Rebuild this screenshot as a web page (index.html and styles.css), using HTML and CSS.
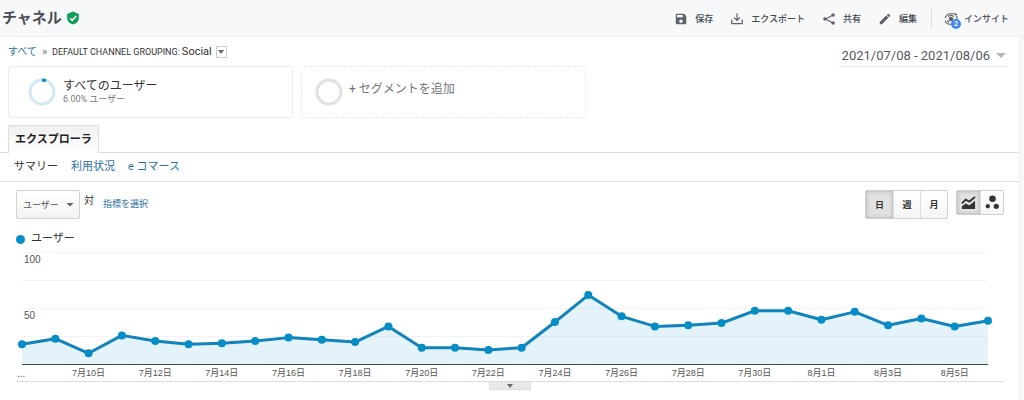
FILE: index.html
```html
<!DOCTYPE html>
<html lang="ja">
<head>
<meta charset="utf-8">
<title>チャネル</title>
<link rel="stylesheet" href="styles.css">
</head>
<body>
<header class="topbar">
  <h1 class="title">チャネル</h1>
  <svg class="shield" viewBox="0 0 24 24" aria-hidden="true"><path fill="#0f9d58" d="M12 1 2 5v7c0 5.500 4.300 9.800 10 11 5.700-1.200 10-5.500 10-11V5z"/><path fill="none" stroke="#fff" stroke-width="2.500" d="m7 12.500 3.500 3.500 7-7.500"/></svg>
  <nav class="actions">
    <button class="action" type="button"><svg class="icon" viewBox="0 0 24 24" aria-hidden="true"><path d="M17 3H5a2 2 0 0 0-2 2v14c0 1.100.9 2 2 2h14a2 2 0 0 0 2-2V7zm-5 16a3 3 0 1 1 0-6 3 3 0 0 1 0 6zm3-10H5V5h10z"/></svg>保存</button>
    <button class="action" type="button"><svg class="icon" viewBox="0 0 24 24" aria-hidden="true"><path d="M11 2h2v10l3.500-3.500L18 10l-6 6-6-6 1.500-1.500L11 12zM2 13h2v6h16v-6h2v8H2z"/></svg>エクスポート</button>
    <button class="action" type="button"><svg class="icon" viewBox="0 0 24 24" aria-hidden="true"><path fill="none" stroke="currentColor" stroke-width="2" d="M19 5 6 12l13 7"/><circle cx="19" cy="5" r="3"/><circle cx="5" cy="12" r="3"/><circle cx="19" cy="19" r="3"/></svg>共有</button>
    <button class="action" type="button"><svg class="icon" viewBox="0 0 24 24" aria-hidden="true"><path d="M3 17.200V21h3.800L17.800 9.900l-3.700-3.700zM20.700 7c.4-.4.4-1 0-1.400l-2.300-2.300a1 1 0 0 0-1.400 0l-1.900 1.800 3.800 3.800z"/></svg>編集</button>
    <button class="action insight" type="button"><span class="insight-mark"><svg class="icon" viewBox="0 0 24 24" aria-hidden="true"><g fill="none" stroke="currentColor" stroke-width="2"><path d="M2 11a10 10 0 0 1 8-8h8M22 7v6M2 15a10 10 0 0 0 6 6h5M7 8a6.500 6.500 0 0 1 10 0M6 14a6.500 6.500 0 0 0 3 4"/></g><circle cx="12" cy="12" r="4"/><circle cx="20" cy="4" r="2"/></svg><span class="badge">2</span></span>インサイト</button>
  </nav>
</header>
<main class="page">
  <div class="heading">
    <div class="crumbs"><a class="all" href="#">すべて</a><span class="sep">»</span><span class="dimension">DEFAULT CHANNEL GROUPING:</span><span>Social</span><button class="crumb-menu" type="button" aria-label="メニュー"><span class="caret"></span></button></div>
    <button class="dates" type="button">2021/07/08 - 2021/08/06<span class="caret caret-large"></span></button>
  </div>
  <section class="segments">
    <button class="segment" type="button"><svg class="ring" viewBox="0 0 28 28" aria-hidden="true"><circle cx="14" cy="14" r="12" fill="none" stroke="#d3e8f4" stroke-width="3"/><path d="M14 2a12 12 0 0 1 4 .7" fill="none" stroke="#058dc7" stroke-width="3"/></svg><span class="segment-text"><span class="segment-name">すべてのユーザー</span><span class="segment-share">6.00% ユーザー</span></span></button>
    <button class="segment add" type="button"><svg class="ring" viewBox="0 0 28 28" aria-hidden="true"><circle cx="14" cy="14" r="12" fill="none" stroke="#e2e2e2" stroke-width="3"/></svg><span class="segment-text">+ セグメントを追加</span></button>
  </section>
  <div class="tabs"><button class="tab" type="button">エクスプローラ</button></div>
  <nav class="subnav"><span>サマリー</span><a href="#">利用状況</a><a href="#">e コマース</a></nav>
  <div class="controls">
    <select class="metric" aria-label="指標"><option>ユーザー</option></select>
    <span class="versus">対</span>
    <a class="pick" href="#">指標を選択</a>
    <div class="group periods"><button class="on" type="button">日</button><button type="button">週</button><button type="button">月</button></div>
    <div class="group views">
      <button class="on" type="button" aria-label="折れ線グラフ"><svg viewBox="0 0 16 16" aria-hidden="true"><path d="M1 15V12l4-3 4 2 6-5v9z"/><path d="m1 9 4-4 4 2 6-5" fill="none" stroke="currentColor" stroke-width="2"/></svg></button>
      <button type="button" aria-label="モーション グラフ"><svg viewBox="0 0 16 16" aria-hidden="true"><circle cx="8" cy="4" r="3.500"/><circle cx="3" cy="12" r="2.300"/><circle cx="12" cy="12" r="2.800"/></svg></button>
    </div>
  </div>
  <div class="legend"><span class="dot"></span>ユーザー</div>
  <section class="chart">
    <svg id="plot" class="plot" viewBox="0 0 988 131" role="img" aria-label="ユーザー"></svg>
    <button class="handle" type="button" aria-label="グラフを広げる"><span class="caret"></span></button>
  </section>
</main>
<script src="chart.js"></script>
</body>
</html>
```
FILE: styles.css
```css
* { box-sizing: border-box; }
body {
  margin: 0;
  background: #f7f8fa;
  color: #333;
  font: 12px/16px Roboto, "Noto Sans CJK JP", sans-serif;
}
button, select { font: inherit; color: inherit; margin: 0; padding: 0; border: 0; background: none; }
a { color: #2a6f9f; text-decoration: none; }
svg { display: block; fill: currentColor; }

.topbar { display: flex; align-items: center; height: 37px; padding: 0 15px 0 2px; border-bottom: 1px solid #eceef0; }
.title { margin: 0; font-size: 15px; line-height: 20px; font-weight: 700; color: #4a4e52; }
.shield { width: 14px; height: 14px; margin-left: 4px; }
.actions { display: flex; align-items: center; gap: 17px; margin-left: auto; padding-top: 2px; }
.action { display: flex; align-items: center; gap: 7px; font-size: 9px; font-weight: 500; color: #45494d; }
.icon { width: 14px; height: 14px; color: #5f6368; }
.insight { height: 20px; padding-left: 12px; border-left: 1px solid #dadce0; gap: 6px; margin-left: -3px; }
.insight-mark { position: relative; }
.badge { position: absolute; left: 7px; top: 7px; width: 10px; height: 10px; border-radius: 50%; background: #4285f4; color: #fff; font-size: 8px; line-height: 10px; text-align: center; }

.page { margin-right: 4px; background: #fff; border-right: 1px solid #f1f1f1; padding-bottom: 12px; }
.heading { display: flex; align-items: flex-start; justify-content: space-between; padding: 6px 11px 0 8px; }
.crumbs { display: flex; align-items: center; gap: 5px; height: 18px; font-size: 11px; }
.all { font-size: 10px; }
.sep { color: #777; }
.dimension { font-size: 9px; margin-right: -3px; }
.crumb-menu { display: flex; align-items: center; justify-content: center; width: 11px; height: 12px; border: 1px solid #ccc; margin-left: -1px; }
.caret { border: 3px solid transparent; border-top: 4px solid #666; border-bottom: 0; }
.caret-large { border-width: 5px 5px 0; border-top-color: #b5b5b5; }
.dates { display: flex; align-items: center; gap: 6px; height: 24px; padding: 2px 2px 0 3px; border-bottom: 1px solid #e4e4e4; color: #555a60; font-size: 13px; }

.segments { display: flex; gap: 8px; padding: 0 8px; margin-top: -1px; }
.segment { display: flex; align-items: center; gap: 7px; width: 285px; height: 52px; padding: 0 19px; border: 1px solid #ebebeb; border-radius: 3px; text-align: left; }
.add { border-style: dashed; padding: 0 13px; gap: 6px; color: #767676; }
.add .segment-text { padding-bottom: 6px; }
.ring { width: 28px; height: 28px; }
.segment-text { display: flex; flex-direction: column; }
.segment-name { line-height: 14px; }
.segment-share { font-size: 9px; line-height: 12px; color: #777; }

.tabs { display: flex; padding: 7px 8px 0; border-bottom: 1px solid #ddd; }
.tab { height: 28px; margin-bottom: -1px; padding: 0 6px; border: 1px solid #ddd; border-bottom: 0; background: linear-gradient(#f0f0f0, #fff); font-weight: 700; font-size: 11px; color: #222; }
.subnav { display: flex; align-items: center; gap: 13px; height: 29px; padding: 0 14px; border-bottom: 1px solid #e2e2e2; font-size: 11px; }
.controls { display: flex; align-items: flex-start; padding: 8px 15px 0 16px; }
.metric { appearance: none; width: 64px; height: 29px; padding: 0 6px; border: 1px solid #d3d3d3; border-radius: 2px; background: linear-gradient(45deg, transparent 50%, #666 50%) 51px 13px / 3px 4px no-repeat, linear-gradient(-45deg, transparent 50%, #666 50%) 54px 13px / 3px 4px no-repeat, linear-gradient(#fff, #f3f3f3); background: linear-gradient(to bottom left, #666 50%, transparent 50%) 50px 12px / 3px 4px no-repeat, linear-gradient(to bottom right, #666 50%, transparent 50%) 53px 12px / 3px 4px no-repeat, linear-gradient(#fff, #f3f3f3); font-size: 9px; color: #555; }
.versus { margin: 3px 9px 0 4px; font-size: 10px; }
.pick { margin-top: 6px; font-size: 9px; }
.group { display: flex; border: 1px solid #d0d0d0; border-radius: 2px; background: linear-gradient(#fff, #f5f5f5); }
.group button { display: flex; align-items: center; justify-content: center; }
.group button + button { border-left: 1px solid #ddd; }
.group .on { background: #e2e2e2; box-shadow: inset 0 0 4px #aaa; }
.periods { margin-left: auto; font-size: 9px; font-weight: 700; }
.periods button { width: 27px; height: 27px; }
.views { margin-left: 8px; }
.views button { width: 23px; height: 23px; }
.views svg { width: 15px; height: 15px; color: #333; }
.legend { display: flex; align-items: center; gap: 6px; padding: 12px 16px 0; font-size: 11px; }
.dot { width: 9px; height: 9px; border-radius: 50%; background: #058dc7; }

.chart { margin: 3px 15px 0 16px; display: flex; flex-direction: column; align-items: center; }
.plot { width: 100%; border-bottom: 1px solid #ddd; overflow: visible; }
.plot text { font: 10px Arial, "Liberation Sans", "Noto Sans CJK JP", sans-serif; fill: #555; }
.plot .day { font-size: 9px; text-anchor: middle; }
.grid { stroke: #f3f3f3; }
.axis { stroke: #444; }
.area { fill: #058dc7; fill-opacity: .11; }
.line { fill: none; stroke: #1284bb; stroke-width: 3; stroke-linejoin: round; }
.point { fill: #058dc7; }
.handle { display: flex; justify-content: center; width: 42px; height: 8px; padding-top: 2px; border: 1px solid #ddd; border-top: 0; border-radius: 0 0 2px 2px; background: #e9e9e9; }
```
FILE: chart.js
```js
const users = [18, 23, 10, 26, 21, 18, 19, 21, 24, 22, 20, 34, 15, 15, 13, 15, 38, 62, 43, 34, 35, 37, 48, 48, 40, 47, 35, 41, 34, 39];
const plot = document.getElementById("plot");
const left = 6, right = 972, base = 114.5, top100 = 2.5;
const x = i => left + (right - left) * i / (users.length - 1);
const y = v => base - (base - top100) * v / 100;

function add(tag, attrs, text) {
  const node = document.createElementNS("http://www.w3.org/2000/svg", tag);
  for (const key in attrs) node.setAttribute(key, attrs[key]);
  if (text) node.textContent = text;
  plot.appendChild(node);
}

[25, 50, 75, 100].forEach(v => add("line", { class: "grid", x1: left, x2: right, y1: y(v), y2: y(v) }));
const points = users.map((v, i) => x(i) + "," + y(v)).join(" ");
add("polygon", { class: "area", points: left + "," + base + " " + points + " " + right + "," + base });
add("line", { class: "axis", x1: left, x2: right, y1: base, y2: base });
add("polyline", { class: "line", points });
users.forEach((v, i) => add("circle", { class: "point", cx: x(i), cy: y(v), r: 4 }));
add("text", { x: 8, y: 13 }, "100");
add("text", { x: 8, y: 69 }, "50");
add("text", { x: 1, y: 127 }, "...");
for (let i = 2; i < users.length; i += 2) {
  const day = new Date(2021, 6, 8 + i);
  add("text", { class: "day", x: x(i), y: 126 }, (day.getMonth() + 1) + "月" + day.getDate() + "日");
}
```
